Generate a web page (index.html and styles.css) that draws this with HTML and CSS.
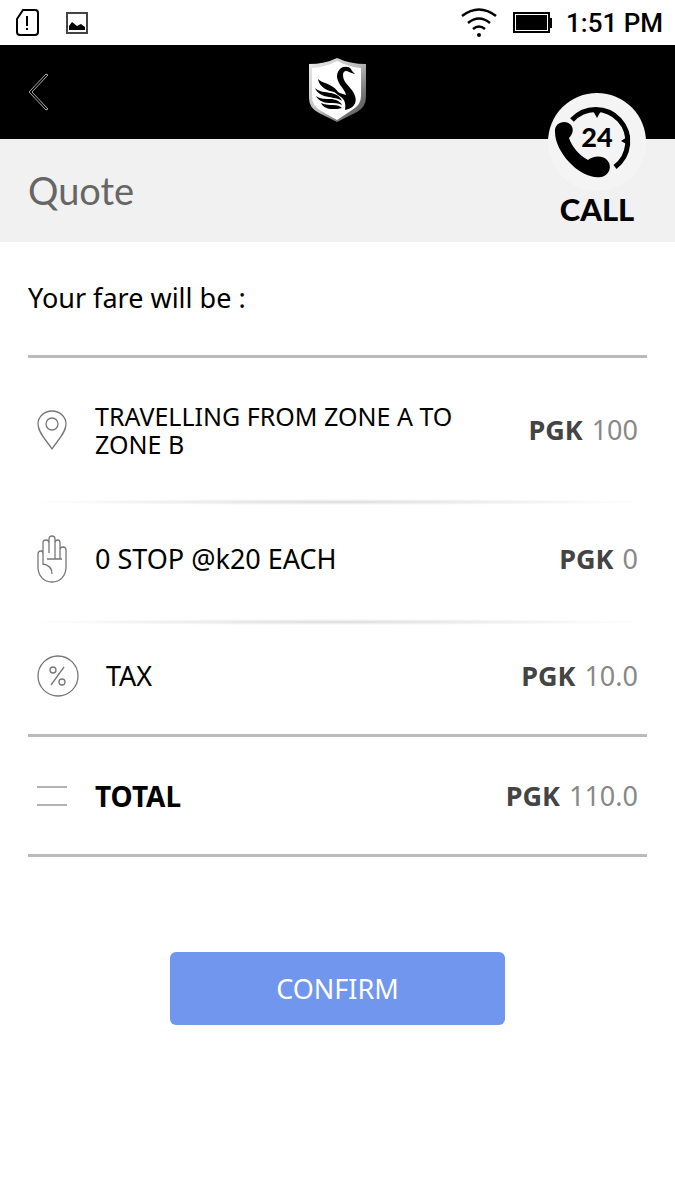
FILE: index.html
```html
<!DOCTYPE html>
<html lang="en">
<head>
    <meta charset="UTF-8">
    <meta name="viewport" content="width=device-width, initial-scale=1.0">
    <title>Quote</title>
    <link rel="stylesheet" href="styles.css">
</head>
<body>
    <div class="status-bar">
        <svg width="24" height="30" viewBox="0 0 24 30" fill="none" stroke="#000" stroke-width="2">
            <path d="M7 2h12q3 0 3 3v19q0 3-3 3H4q-3 0-3-3V11z"/>
            <path d="M11 8v10M11 20v2"/>
        </svg>
        <svg class="picture-icon" width="22" height="22" viewBox="0 0 22 22">
            <rect x="1" y="1" width="20" height="20" fill="none" stroke="#444" stroke-width="2"/>
            <path d="M3 18v-4l3-4 5 4 4-2 4 3v3z"/>
        </svg>
        <svg class="wifi-icon" width="36" height="30" viewBox="0 0 36 30" fill="none" stroke="#000" stroke-width="2.5">
            <path d="M1 8q17-13 34 0M7 15q11-9 22 0M12 21q6-5 12 0"/>
            <circle cx="18" cy="27" r="2" fill="#000" stroke="none"/>
        </svg>
        <svg class="battery-icon" width="40" height="22" viewBox="0 0 40 22">
            <path d="M0 0h37v6h2v10h-2v5H0z"/>
            <rect x="2.5" y="2.5" width="32" height="16" fill="none" stroke="#fff"/>
        </svg>
        <span class="time">1:51 PM</span>
    </div>

    <header class="header">
        <button class="back" type="button" aria-label="Back">
            <svg width="22" height="38" viewBox="0 0 22 38" fill="none" stroke="#aaa" stroke-width="1">
                <path d="M18 1L1 19l17 18 2-1L4 19 20 2z"/>
            </svg>
        </button>
        <svg class="logo" width="60" height="66" viewBox="0 0 60 66">
            <defs>
                <linearGradient id="metal" x1="0" y1="0" x2="1" y2="1">
                    <stop offset="0" stop-color="#eee"/>
                    <stop offset="0.5" stop-color="#bbb"/>
                    <stop offset="0.75" stop-color="#777"/>
                    <stop offset="1" stop-color="#444"/>
                </linearGradient>
            </defs>
            <path fill="url(#metal)" d="M1 7Q17 7 29 1q13 6 29 6v33q0 10-9 15L29 65 11 56Q1 51 1 41z"/>
            <path fill="#fff" d="M4 11Q18 10 29 4q12 6 24 7v28q0 9-9 14L29 63 13 54Q4 49 4 39z"/>
            <!-- swan -->
            <path d="M47 17c-3-1-4-1-6-2-3-2-6-1-6 3 0 6 4 9 8 14 5 6 6 12 3 16-2 3-5 4-9 5 1-6 0-10-4-13-3-2-6-4-8-7 5 2 9 4 13 5-1-6-8-10-9-18 0-6 4-11 10-10 3 0 4 2 5 4z"/>
            <path d="M10 22c4 4 10 4 15 8 3 2 5 4 6 7-3-2-6-2-9-3-6-2-11-6-12-12z"/>
            <path d="M7 31c4 4 10 4 16 5 5 1 9 3 11 8-4-3-8-3-13-4-7-1-12-4-14-9z"/>
            <path d="M8 39c4 3 9 3 14 3 5 0 10 2 12 6-4-2-8-2-13-2-6 0-11-3-13-7z"/>
            <path d="M13 46c5 2 9 2 12 2 4 0 7 1 9 3-3 1-6 1-9 1-6 0-10-2-12-6z"/>
        </svg>
        <a class="call" href="tel:24">
            <svg width="98" height="98" viewBox="0 0 98 98">
                <circle cx="49" cy="49" r="49" fill="#f4f4f4"/>
                <path fill="none" stroke="#000" stroke-width="5" d="M24 27A32 32 0 1 1 67 74"/>
                <path d="M44 16h10l-5 9zM82 42v11l-9-5z"/>
                <path d="M7 39c-1-10 11-13 16-7 3 4 2 9-2 13 3 9 10 17 19 22 5-4 14-5 19 0 6 6 2 16-6 17C33 87 7 60 7 39z"/>
                <text x="49" y="54" text-anchor="middle">24</text>
            </svg>
            <span>CALL</span>
        </a>
    </header>

    <h1 class="title">Quote</h1>

    <main class="content">
        <h2 class="intro">Your fare will be :</h2>

        <ul class="fares">
            <li class="fare trip">
                <span class="icon">
                    <svg width="30" height="40" viewBox="0 0 30 40">
                        <path d="M15 39C10 31 1 23 1 14a14 13 0 0 1 28 0c0 9-9 17-14 25z"/>
                        <circle cx="15" cy="14" r="6"/>
                    </svg>
                </span>
                <span class="label">TRAVELLING FROM ZONE A TO ZONE B</span>
                <span class="amount"><b>PGK</b> 100</span>
            </li>
            <li class="fare stops">
                <span class="icon">
                    <svg width="30" height="48" viewBox="0 0 30 48">
                        <path d="M6 30V19q0-3-2-3-3 0-3 3v13c0 9 6 15 14 15s14-6 14-15V15q0-3-3-3t-3 3v9M6 19V8q0-3 3-3t3 3v10M12 9V4q0-3 3-3t3 3v20M18 8q0-3 3-3 2 0 2 3v9M10 24h15M6 29c6 1 9 4 9 10"/>
                    </svg>
                </span>
                <span class="label">0 STOP @k20 EACH</span>
                <span class="amount"><b>PGK</b> 0</span>
            </li>
            <li class="fare tax">
                <span class="icon">
                    <svg width="42" height="42" viewBox="0 0 42 42">
                        <circle cx="21" cy="21" r="20"/>
                        <circle cx="16" cy="15" r="3"/>
                        <circle cx="25" cy="27" r="3"/>
                        <path d="M27 12L14 30"/>
                    </svg>
                </span>
                <span class="label">TAX</span>
                <span class="amount"><b>PGK</b> 10.0</span>
            </li>
            <li class="fare total">
                <span class="icon">
                    <svg width="30" height="20" viewBox="0 0 30 20">
                        <path d="M0 1h30M0 19h30"/>
                    </svg>
                </span>
                <span class="label">TOTAL</span>
                <span class="amount"><b>PGK</b> 110.0</span>
            </li>
        </ul>

        <button class="confirm" type="button">CONFIRM</button>
    </main>
</body>
</html>
```
FILE: styles.css
```css
* {
    box-sizing: border-box;
}
body {
    margin: 0;
    background-color: #fff;
    color: #000;
    font-family: "Noto Sans", sans-serif;
}
button {
    border: 0;
    padding: 0;
    background: none;
    cursor: pointer;
}

/* status bar */
.status-bar {
    display: flex;
    align-items: center;
    height: 45px;
    padding: 0 12px 0 16px;
}
.picture-icon {
    margin-left: 26px;
}
.wifi-icon {
    margin-left: auto;
}
.battery-icon {
    margin: 0 13px 0 16px;
}
.time {
    font: 500 26px/32px Roboto, sans-serif;
}

/* header */
.header {
    position: relative;
    display: flex;
    align-items: center;
    justify-content: center;
    height: 94px;
    padding-bottom: 4px;
    background-color: #000;
}
.back {
    position: absolute;
    left: 28px;
    top: 28px;
}
.back svg, .call svg {
    display: block;
}
.call {
    position: absolute;
    top: 48px;
    right: 29px;
    text-align: center;
    color: #000;
    text-decoration: none;
    font: 900 31px/36px Lato, sans-serif;
}
.call text {
    font: 900 27px Lato, sans-serif;
}
.title {
    margin: 0;
    padding: 0 28px;
    background-color: #f1f1f1;
    color: #666;
    font: 400 38px/103px Lato, sans-serif;
}

/* fare list */
.content {
    padding: 36px 28px;
}
.intro {
    margin: 0 0 37px;
    font-size: 27px;
    font-weight: 400;
    line-height: 40px;
}
.fares {
    margin: 0;
    padding: 0;
    list-style: none;
    border-top: 3px solid #bbb;
    border-bottom: 3px solid #bbb;
}
.fare {
    display: flex;
    align-items: center;
    height: 120px;
    padding: 0 9px;
    font-size: 27px;
    line-height: 28px;
}
.icon {
    flex: none;
    width: 58px;
}
.icon svg {
    display: block;
    fill: none;
    stroke: #777;
    stroke-width: 1.3;
}
.label {
    flex: 1;
    padding-right: 30px;
}
.amount {
    color: #888;
    white-space: nowrap;
}
.amount b {
    margin-right: 2px;
    color: #444;
}
.trip {
    height: 147px;
    padding-bottom: 4px;
}
.trip .label {
    font-size: 25px;
}
.trip, .stops {
    background: radial-gradient(closest-side, #ddd, #fff) bottom / 100% 6px no-repeat;
}
.stops {
    padding-bottom: 12px;
}
.tax {
    height: 109px;
    padding-bottom: 8px;
}
.tax .icon {
    width: 69px;
}
.total {
    border-top: 3px solid #bbb;
}
.total .icon svg {
    stroke: #999;
}
.total .label {
    font-size: 28px;
    font-weight: 700;
}
.confirm {
    display: block;
    width: 54%;
    height: 73px;
    margin: 95px auto 0;
    border-radius: 6px;
    background-color: #7096ee;
    color: #fff;
    font: 400 27px/28px "Noto Sans", sans-serif;
}
```
